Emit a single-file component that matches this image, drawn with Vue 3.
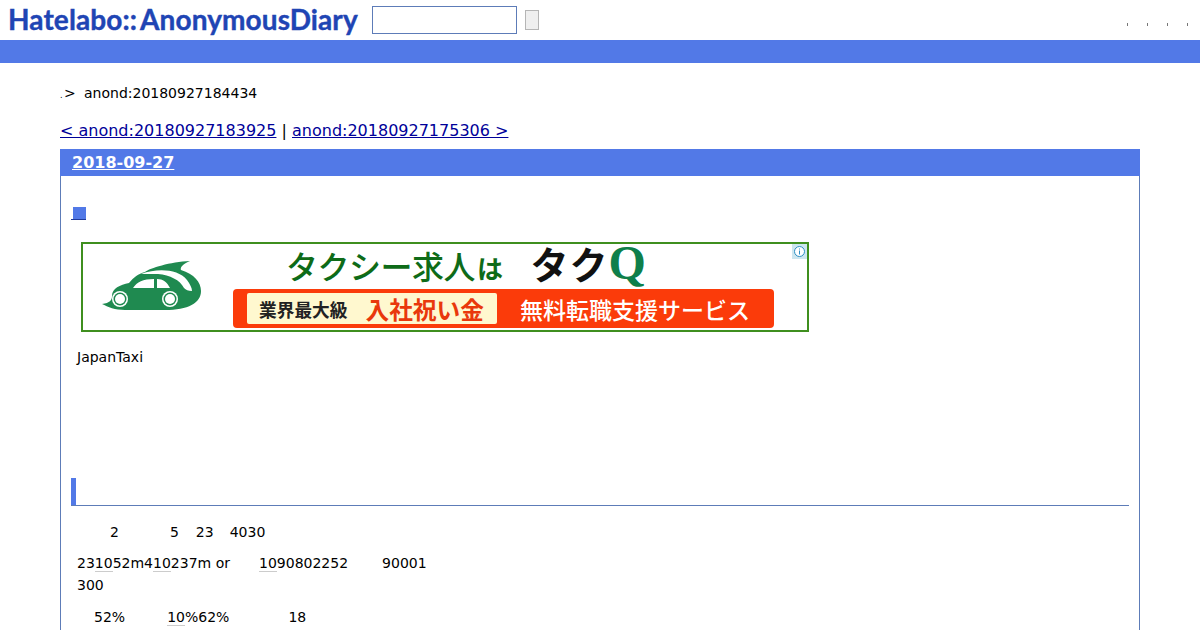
<script setup>
const paragraphs = [
  {
    cls: 'p1',
    lines: [[
      { gap: 33, text: '2' },
      { gap: 51, text: '5' },
      { gap: 17, text: '23' },
      { gap: 16, text: '4030' },
    ]],
  },
  {
    cls: 'p2',
    lines: [
      [
        { gap: 0, text: '23' },
        { gap: 0, text: '10', mark: true },
        { gap: 0, text: '52m4' },
        { gap: 0, text: '10', mark: true },
        { gap: 0, text: '237m or' },
        { gap: 29, text: '10', mark: true },
        { gap: 0, text: '90802252' },
        { gap: 34, text: '90001' },
      ],
      [{ gap: 0, text: '300' }],
    ],
  },
  {
    cls: 'p3',
    lines: [[
      { gap: 17, text: '52%' },
      { gap: 42, text: '10', mark: true },
      { gap: 0, text: '%62%' },
      { gap: 59, text: '18' },
    ]],
  },
];
</script>

<template>
  <div class="page">
    <header class="top">
      <a class="logo">Hatelabo::<span class="logo-b">AnonymousDiary</span></a>
      <input class="search" type="text" />
      <button class="go"></button>
      <div class="dots">
        <span v-for="n in 4" :key="n" class="dot"></span>
      </div>
    </header>
    <div class="bar"></div>

    <main class="main">
      <div class="crumb">
        <span class="tiny">.</span>
        <span class="sep">&gt;</span>
        <span>anond:20180927184434</span>
      </div>
      <div class="pager">
        <a href="#">&lt; anond:20180927183925</a> | <a href="#">anond:20180927175306 &gt;</a>
      </div>

      <section class="day">
        <h2 class="day-head"><a href="#">2018-09-27</a></h2>
        <div class="day-body">
          <a class="sq-link" href="#"><span class="sq"></span></a>

          <div class="ad">
            <svg class="car" viewBox="100 258 104 54">
              <path fill="#1f8a50" d="M102 304 C110 303 112 300 112 296 C112 288 120 285 129 283 C134 277 138 274 145 272 C150 268 170 262 190 261 C182 264 180 268 181 270 C194 274 201 282 201 291 C201 303 188 310 165 310 L125 310 C115 310 108 307 102 304 Z" />
              <path fill="#fff" d="M141 274 C158 268 178 269 187 280 C190 284 192 288 192 291 C188 291 186 290 184 288 C180 280 170 275 158 274 C150 274 145 274 141 274 Z" />
              <path fill="#fff" d="M133 288 C137 282 143 279 154 279 L154 288 Z M157 279 C163 279 167 282 170 288 L157 288 Z" />
              <circle cx="120" cy="299" r="8" fill="#fff" />
              <circle cx="120" cy="299" r="6.5" fill="#1f8a50" />
              <circle cx="120" cy="299" r="5" fill="#fff" />
              <circle cx="170" cy="299" r="8" fill="#fff" />
              <circle cx="170" cy="299" r="6.5" fill="#1f8a50" />
              <circle cx="170" cy="299" r="5" fill="#fff" />
            </svg>
            <div class="ad-main">
              <div class="ad-title">
                <span class="ad-job">タクシー求人<span class="ha">は</span></span>
                <span class="ad-brand">タク<span class="q">Q</span></span>
              </div>
              <div class="ad-strip">
                <div class="ad-note">
                  <span class="ad-small">業界最大級</span>
                  <span class="ad-red">入社祝い金</span>
                </div>
                <span class="ad-white">無料転職支援サービス</span>
              </div>
            </div>
            <span class="ad-info">
              <svg viewBox="0 0 15 15" width="15" height="15">
                <circle cx="7.5" cy="7.5" r="5" fill="#fff" stroke="#2e8fc4" />
                <path d="M7.5 6.5 V10.5 M7.5 4.5 V5.5" stroke="#2e8fc4" fill="none" />
              </svg>
            </span>
          </div>

          <p class="maker">JapanTaxi</p>

          <div class="rule"><span class="rule-mark"></span></div>

          <p v-for="p in paragraphs" :key="p.cls" class="para" :class="p.cls">
            <span v-for="(line, i) in p.lines" :key="i" class="line">
              <span
                v-for="(seg, j) in line"
                :key="j"
                :class="{ mark: seg.mark }"
                :style="{ marginLeft: seg.gap + 'px' }"
              >{{ seg.text }}</span>
            </span>
          </p>
        </div>
      </section>
    </main>
  </div>
</template>

<style>
html, body {
  margin: 0;
  background: #fff;
  overflow: hidden;
}
</style>

<style scoped>
.page {
  width: 1200px;
  height: 630px;
  overflow: hidden;
  font-family: "DejaVu Sans", sans-serif;
  font-size: 14px;
  color: #000;
}

.top {
  height: 40px;
  display: flex;
  align-items: flex-start;
  position: relative;
}

.logo {
  margin: 2px 0 0 8px;
  width: 351px;
  font-family: "Lato", sans-serif;
  font-size: 28px;
  line-height: 34px;
  font-weight: 700;
  letter-spacing: 0.1px;
  color: #1f45b4;
  white-space: nowrap;
  -webkit-text-stroke: 0.4px #1f45b4;
}

.logo-b {
  margin-left: 3px;
}

.search {
  box-sizing: border-box;
  width: 145px;
  height: 28px;
  margin: 6px 0 0 13px;
  padding: 0;
  border: 1px solid #5d7cb8;
  background: #fff;
}

.go {
  box-sizing: border-box;
  width: 14px;
  height: 20px;
  margin: 10px 0 0 8px;
  padding: 0;
  border: 1px solid #b5b5b5;
  background: #efefef;
}

.dots {
  position: absolute;
  top: 23px;
  left: 1127px;
  display: flex;
  gap: 19px;
}

.dot {
  width: 1px;
  height: 3px;
  background: #777;
}

.bar {
  height: 23px;
  background: #5279e7;
}

.main {
  padding: 0 60px;
}

.crumb {
  display: flex;
  align-items: baseline;
  margin-top: 21px;
  line-height: 18px;
}

.tiny {
  font-size: 8px;
  width: 4px;
}

.sep {
  width: 20px;
}

.pager {
  margin-top: 16px;
  font-size: 16px;
  line-height: 19px;
}

.pager a {
  color: #000099;
}

.day {
  margin-top: 9px;
  border: 1px solid #5d7cb8;
  border-bottom: 0;
  height: 600px;
}

.day-head {
  margin: -1px -1px 0;
  height: 27px;
  padding-left: 12px;
  background: #5279e7;
  font-size: 16px;
  line-height: 27px;
  font-weight: 700;
}

.day-head a {
  color: #fff;
}

.day-body {
  padding: 0 10px;
}

.sq-link {
  display: block;
  width: 15px;
  margin: 31px 0 0 0;
  border-bottom: 1px solid #1f3a9a;
}

.sq {
  display: block;
  width: 13px;
  height: 12px;
  margin-left: 2px;
  background: #5279e7;
}

.ad {
  box-sizing: border-box;
  position: relative;
  width: 728px;
  height: 90px;
  margin: 22px 0 0 10px;
  border: 2px solid #3f8f1f;
  display: flex;
  background: #fff;
}

.car {
  width: 104px;
  height: 54px;
  margin: 14px 0 0 17px;
  flex: none;
}

.ad-main {
  margin-left: 29px;
  font-family: "Noto Sans CJK JP", sans-serif;
}

.ad-title {
  display: flex;
  align-items: flex-start;
  height: 43px;
  white-space: nowrap;
}

.ad-job {
  margin-left: 53px;
  font-size: 32px;
  line-height: 43px;
  font-weight: 500;
  color: #0e6b18;
  letter-spacing: -0.5px;
}

.ha {
  font-size: 26px;
  font-weight: 700;
  margin-left: 2px;
}

.ad-brand {
  margin-left: 28px;
  font-size: 38px;
  line-height: 38px;
  font-weight: 700;
  color: #111;
  letter-spacing: 1px;
}

.q {
  font-family: "Liberation Serif", serif;
  font-weight: 700;
  font-size: 48px;
  color: #0f7f4a;
  margin-left: 0;
}

.ad-strip {
  width: 541px;
  height: 39px;
  margin-top: 2px;
  border-radius: 4px;
  background: #fb3b0a;
  display: flex;
  align-items: center;
  white-space: nowrap;
}

.ad-note {
  box-sizing: border-box;
  width: 250px;
  height: 31px;
  margin-left: 14px;
  border-radius: 2px;
  background: #fff8cf;
  display: flex;
  align-items: center;
  padding-left: 12px;
}

.ad-small {
  font-size: 17.7px;
  font-weight: 700;
  color: #222;
}

.ad-red {
  margin-left: 18px;
  font-size: 23.7px;
  font-weight: 700;
  color: #e9380c;
}

.ad-white {
  margin-left: 23px;
  font-size: 23px;
  font-weight: 500;
  color: #fff;
}

.ad-info {
  position: absolute;
  top: 0;
  right: 0;
  width: 15px;
  height: 15px;
  background: #cde6ef;
}

.ad-info svg {
  display: block;
}

.maker {
  margin: 16px 0 0 6px;
  line-height: 18px;
}

.rule {
  height: 29px;
  margin-top: 110px;
  border-bottom: 1px solid #5d7cb8;
}

.rule-mark {
  display: block;
  width: 5px;
  height: 27px;
  position: relative;
  top: 2px;
  background: #5279e7;
}

.para {
  margin: 0 0 0 6px;
  line-height: 22px;
}

.p1 {
  margin-top: 15px;
}

.p2 {
  margin-top: 9px;
}

.p3 {
  margin-top: 10px;
}

.line {
  display: block;
  white-space: nowrap;
}

.mark {
  border-bottom: 1px solid #ccc;
}
</style>
